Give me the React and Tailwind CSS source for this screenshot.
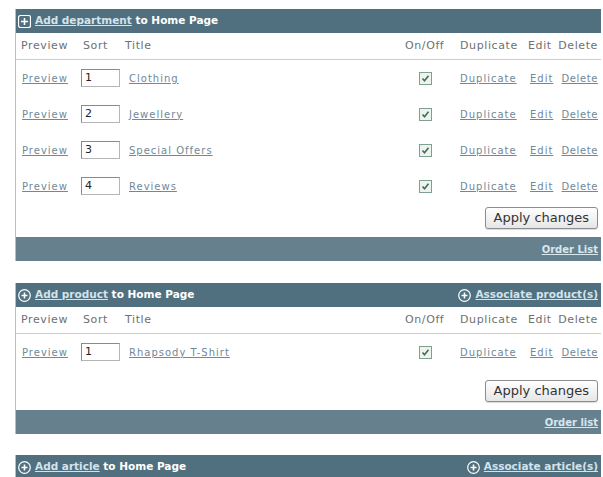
import React from "react";

const font = { fontFamily: '"DejaVu Sans", Verdana, sans-serif' };

function SquarePlus() {
  return (
    <svg width="13" height="13" viewBox="0 0 13 13" className="shrink-0">
      <rect x="0.5" y="0.5" width="12" height="12" rx="2" fill="none" stroke="#ffffff" strokeWidth="1.2" />
      <path d="M6.5 3v7M3 6.5h7" stroke="#ffffff" strokeWidth="1.6" />
    </svg>
  );
}

function CirclePlus() {
  return (
    <svg width="13" height="13" viewBox="0 0 13 13" className="shrink-0">
      <circle cx="6.5" cy="6.5" r="5.8" fill="none" stroke="#ffffff" strokeWidth="1.2" />
      <path d="M6.5 3.5v6M3.5 6.5h6" stroke="#ffffff" strokeWidth="1.6" />
    </svg>
  );
}

function Check() {
  return (
    <div className="w-[13px] h-[13px] border border-[#7f9f8f] bg-[#eef3ef] flex items-center justify-center">
      <svg width="9" height="9" viewBox="0 0 9 9">
        <path d="M1.5 4.5l2 2.2 4-5" fill="none" stroke="#3f6f55" strokeWidth="1.6" />
      </svg>
    </div>
  );
}

function Link({ children }) {
  return <span className="underline tracking-[1px] text-[#7188986]">{children}</span>;
}

function Row({ n, title }) {
  return (
    <div className="flex items-center h-[36px] text-[10px] text-[#718898]">
      <div className="w-[65px] pl-[6px]">
        <span className="underline tracking-[1px]">Preview</span>
      </div>
      <div className="w-[48px]">
        <div className="w-[39px] h-[18px] border border-[#b5b5b5] border-t-[#8a8a8a] border-l-[#8a8a8a] bg-white text-[11px] leading-[16px] pl-[3px] text-[#222]">
          {n}
        </div>
      </div>
      <div className="flex-1">
        <span className="underline tracking-[1px]">{title}</span>
      </div>
      <div className="w-[41px] flex justify-center">
        <Check />
      </div>
      <div className="w-[84px] pl-[14px]">
        <span className="underline tracking-[1px]">Duplicate</span>
      </div>
      <div className="w-[24px]">
        <span className="underline tracking-[1px]">Edit</span>
      </div>
      <div className="w-[44px] text-right">
        <span className="underline tracking-[0.6px]">Delete</span>
      </div>
      <div className="w-[3px]" />
    </div>
  );
}

function ColumnHeads() {
  return (
    <div className="flex items-center h-[27px] border-b border-[#c9cdd0] text-[11px] tracking-[0.6px] text-[#707070]">
      <div className="w-[67px] pl-[5px]">Preview</div>
      <div className="w-[42px]">Sort</div>
      <div className="flex-1">Title</div>
      <div className="w-[55px]">On/Off</div>
      <div className="w-[68px]">Duplicate</div>
      <div className="w-[26px]">Edit</div>
      <div className="w-[44px] text-right">Delete</div>
      <div className="w-[3px]" />
    </div>
  );
}

function HeadBar({ icon, what, right }) {
  return (
    <div className="h-[24px] bg-[#50707f] flex items-center justify-between pl-[2px] pr-[3px] text-[10.5px] font-bold text-white">
      <div className="flex items-center gap-[4px]">
        {icon}
        <span>
          <span className="underline text-[#d3e3ec]">{what}</span> to Home Page
        </span>
      </div>
      {right && (
        <div className="flex items-center gap-[4px]">
          <CirclePlus />
          <span className="underline text-[#d3e3ec]">{right}</span>
        </div>
      )}
    </div>
  );
}

function Panel({ icon, what, right, rows, footer, buttonTop }) {
  return (
    <div className="border-l border-[#b9bfc3] bg-white">
      <HeadBar icon={icon} what={what} right={right} />
      <ColumnHeads />
      <div>
        {rows.map((r) => (
          <Row key={r[0]} n={r[0]} title={r[1]} />
        ))}
      </div>
      <div className={"flex justify-end pr-[3px] pb-[8px] " + buttonTop}>
        <button className="h-[22px] px-[8px] rounded-[3px] border border-[#8d8d8d] bg-gradient-to-b from-white to-[#e6e6e6] text-[13px] leading-[20px] text-[#333] shadow-[0_1px_1px_rgba(0,0,0,0.15)]">
          Apply changes
        </button>
      </div>
      <div className="h-[24px] bg-[#66808e] flex items-center justify-end pr-[3px] text-[10px] font-bold">
        <span className="underline text-[#d8e6ee]">{footer}</span>
      </div>
    </div>
  );
}

export default function App() {
  return (
    <div className="w-[603px] h-[477px] overflow-hidden bg-white pl-[15px] pr-[2px] pt-[9px]" style={font}>
      <Panel
        icon={<SquarePlus />}
        what="Add department"
        rows={[
          ["1", "Clothing"],
          ["2", "Jewellery"],
          ["3", "Special Offers"],
          ["4", "Reviews"],
        ]}
        footer="Order List"
        buttonTop="pt-[3px]"
      />
      <div className="h-[22px]" />
      <Panel
        icon={<CirclePlus />}
        what="Add product"
        right="Associate product(s)"
        rows={[["1", "Rhapsody T-Shirt"]]}
        footer="Order list"
        buttonTop="pt-[10px]"
      />
      <div className="h-[21px]" />
      <div className="border-l border-[#b9bfc3]">
        <HeadBar icon={<CirclePlus />} what="Add article" right="Associate article(s)" />
      </div>
    </div>
  );
}
